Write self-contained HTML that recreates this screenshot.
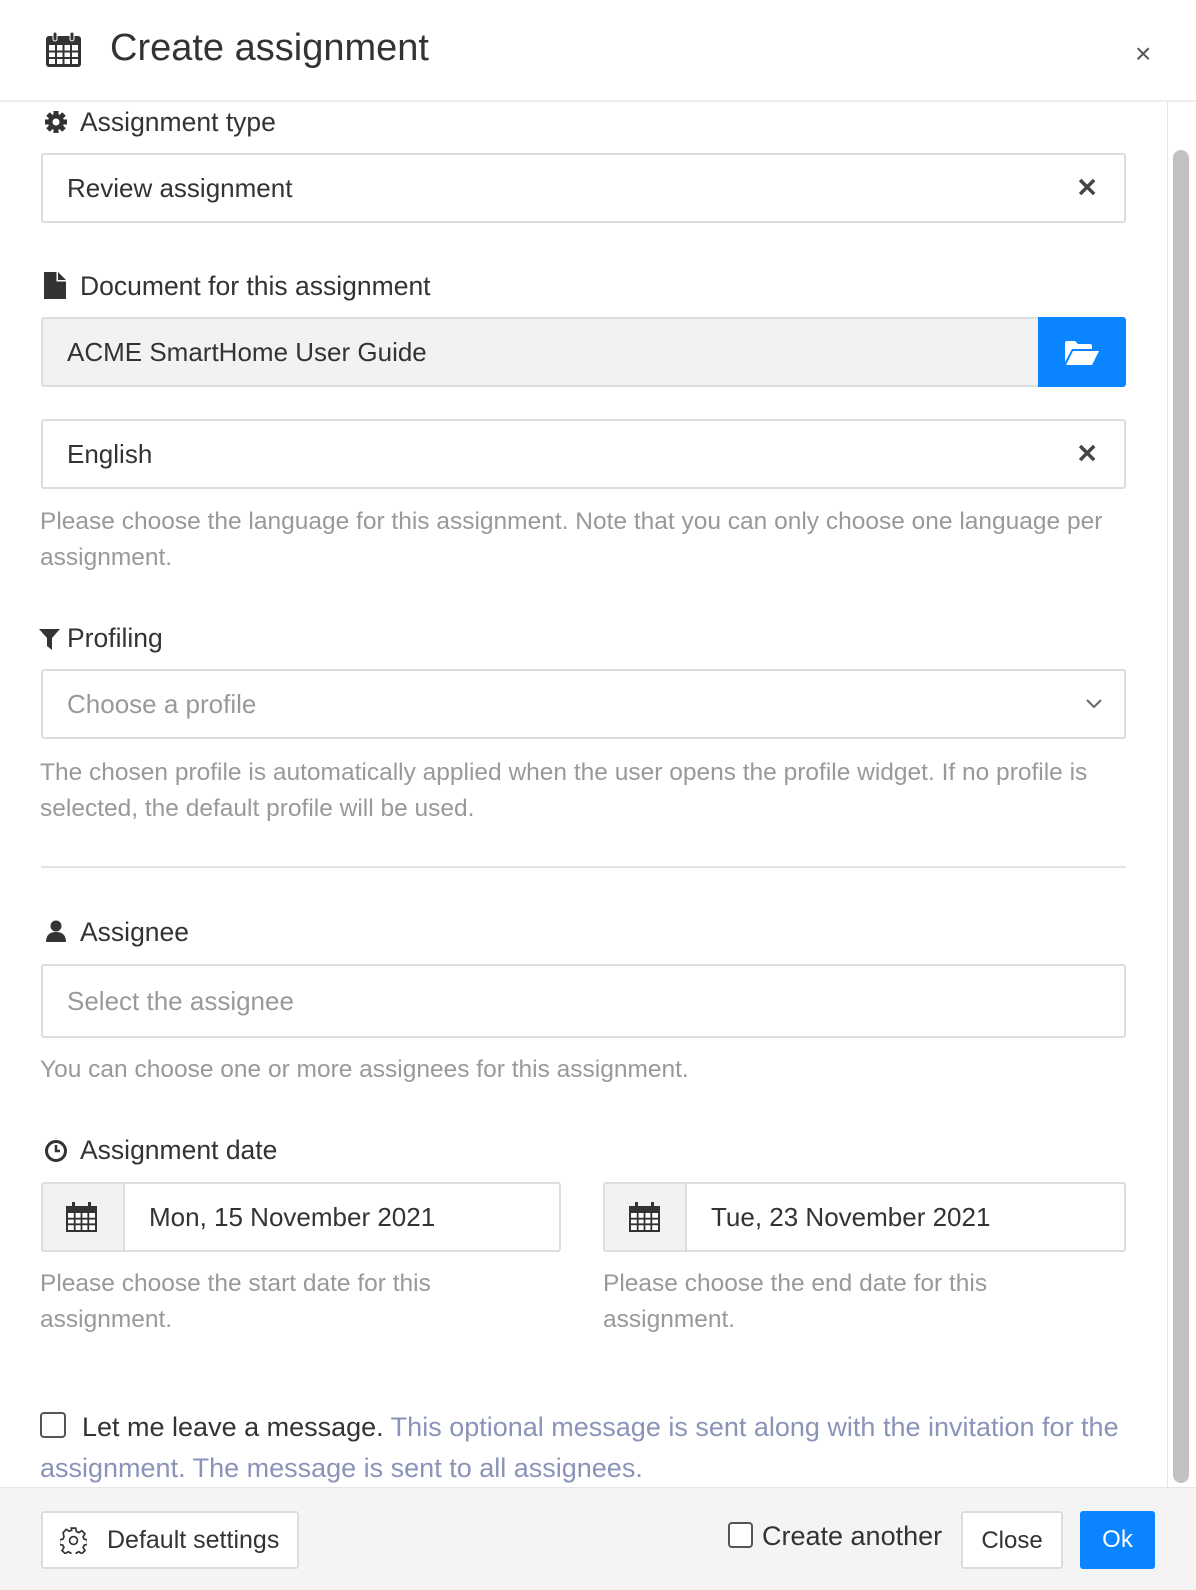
<!DOCTYPE html>
<html><head><meta charset="utf-8"><style>
*{box-sizing:border-box;margin:0;padding:0}
body{width:1196px;height:1590px;position:relative;background:#fff;font-family:"Liberation Sans",sans-serif;color:#333;overflow:hidden}
.a{position:absolute}
.lbl{font-size:26.5px;color:#333;white-space:nowrap}
.inp{position:absolute;left:41px;width:1085px;border:2px solid #ddd;border-radius:3px;background:#fff;font-size:26px;padding-left:24px;display:flex;align-items:center}
.help{position:absolute;left:40px;font-size:24.5px;color:#999;line-height:36px;white-space:nowrap}
.x{position:absolute;right:26px;top:50%;transform:translateY(-50%);font-size:26px;font-weight:bold;color:#444}
</style></head><body>
<svg class="a" style="left:45px;top:31px" width="37" height="37" viewBox="0 0 37 37"><rect x="1" y="5" width="35" height="31" rx="3" fill="#333"/><rect x="8" y="1" width="4" height="9" rx="2" fill="#333" stroke="#fff" stroke-width="1"/><rect x="25" y="1" width="4" height="9" rx="2" fill="#333" stroke="#fff" stroke-width="1"/><g fill="#fff"><rect x="4" y="14" width="29" height="19"/></g><g stroke="#333" stroke-width="2"><line x1="11" y1="14" x2="11" y2="33"/><line x1="18.5" y1="14" x2="18.5" y2="33"/><line x1="26" y1="14" x2="26" y2="33"/><line x1="4" y1="20.5" x2="33" y2="20.5"/><line x1="4" y1="27" x2="33" y2="27"/></g></svg>
<div class="a" style="left:110px;top:27px;font-size:38px;color:#333">Create assignment</div>
<div class="a" style="left:1135px;top:38px;font-size:28px;color:#555">×</div>
<div class="a" style="left:0;top:100px;width:1196px;height:2px;background:#eee"></div>
<div class="a" style="left:1167px;top:102px;width:1px;height:1385px;background:#e5e5e5"></div>
<div class="a" style="left:1173px;top:150px;width:16px;height:1333px;border-radius:8px;background:#c1c1c1"></div>

<svg class="a" style="left:44px;top:110px" width="24" height="24" viewBox="0 0 24 24"><g fill="#333"><circle cx="12" cy="12" r="8"/><g stroke="#333" stroke-width="5"><line x1="12" y1="1" x2="12" y2="23"/><line x1="1" y1="12" x2="23" y2="12"/><line x1="4" y1="4" x2="20" y2="20"/><line x1="20" y1="4" x2="4" y2="20"/></g></g><circle cx="12" cy="12" r="3.5" fill="#fff"/></svg>
<div class="a lbl" style="left:80px;top:107px">Assignment type</div>
<div class="inp" style="top:153px;height:70px">Review assignment<span class="x">✕</span></div>

<svg class="a" style="left:44px;top:272px" width="22" height="27" viewBox="0 0 22 27"><path d="M0 0H13L22 9V27H0Z" fill="#333"/><path d="M13 0V9H22" fill="#fff" stroke="#fff" stroke-width="1"/><path d="M14 0L22 8H14Z" fill="#333"/></svg>
<div class="a lbl" style="left:80px;top:271px">Document for this assignment</div>
<div class="inp" style="top:317px;height:70px;background:#f2f2f2;width:1000px;border-right:none">ACME SmartHome User Guide</div>
<div class="a" style="left:1038px;top:317px;width:88px;height:70px;background:#0a84ff;border-radius:0 3px 3px 0"></div>
<svg class="a" style="left:1064px;top:340px" width="36" height="26" viewBox="0 0 36 26"><path d="M1 3Q1 1 3 1H11L14 4H26Q28 4 28 6V9H8L1 22Z" fill="#fff"/><path d="M9 11H35L28 25H2Z" fill="#fff"/></svg>
<div class="inp" style="top:419px;height:70px">English<span class="x">✕</span></div>
<div class="help" style="top:504px">Please choose the language for this assignment. Note that you can only choose one language per<br>assignment.</div>

<svg class="a" style="left:39px;top:629px" width="21" height="21" viewBox="0 0 21 21"><path d="M0 0H21L13 9V21L8 17V9Z" fill="#333"/></svg>
<div class="a lbl" style="left:67px;top:623px">Profiling</div>
<div class="inp" style="top:669px;height:70px;color:#999">Choose a profile<svg style="position:absolute;right:22px;top:28px" width="16" height="10" viewBox="0 0 16 10"><path d="M1 1L8 8L15 1" fill="none" stroke="#666" stroke-width="2"/></svg></div>
<div class="help" style="top:755px">The chosen profile is automatically applied when the user opens the profile widget. If no profile is<br>selected, the default profile will be used.</div>
<div class="a" style="left:41px;top:866px;width:1085px;height:2px;background:#e3e3e3"></div>

<svg class="a" style="left:46px;top:920px" width="20" height="22" viewBox="0 0 20 22"><circle cx="10" cy="6" r="5.5" fill="#333"/><path d="M0 22Q0 12 10 12Q20 12 20 22Z" fill="#333"/></svg>
<div class="a lbl" style="left:80px;top:917px">Assignee</div>
<div class="inp" style="top:964px;height:74px;color:#999">Select the assignee</div>
<div class="help" style="top:1052px">You can choose one or more assignees for this assignment.</div>

<svg class="a" style="left:44px;top:1139px" width="24" height="24" viewBox="0 0 24 24"><circle cx="12" cy="12" r="9.5" fill="none" stroke="#333" stroke-width="3"/><path d="M12 6V12H16" fill="none" stroke="#333" stroke-width="2.5"/></svg>
<div class="a lbl" style="left:80px;top:1135px">Assignment date</div>

<div class="inp" style="top:1182px;height:70px;width:520px;padding-left:106px">Mon, 15 November 2021</div>
<div class="a" style="left:43px;top:1184px;width:82px;height:66px;background:#f2f2f2;border-right:2px solid #ddd"></div>
<div class="inp" style="left:603px;top:1182px;height:70px;width:523px;padding-left:106px">Tue, 23 November 2021</div>
<div class="a" style="left:605px;top:1184px;width:82px;height:66px;background:#f2f2f2;border-right:2px solid #ddd"></div>
<svg class="a" style="left:65px;top:1202px" width="33" height="31" viewBox="0 0 33 31"><rect x="1" y="4" width="31" height="26" fill="#333"/><rect x="7" y="0" width="3" height="7" fill="#333"/><rect x="23" y="0" width="3" height="7" fill="#333"/><rect x="3" y="11" width="27" height="17" fill="#fff"/><g stroke="#333" stroke-width="1.8"><line x1="9.7" y1="11" x2="9.7" y2="28"/><line x1="16.5" y1="11" x2="16.5" y2="28"/><line x1="23.3" y1="11" x2="23.3" y2="28"/><line x1="3" y1="16.7" x2="30" y2="16.7"/><line x1="3" y1="22.3" x2="30" y2="22.3"/></g></svg>
<svg class="a" style="left:628px;top:1202px" width="33" height="31" viewBox="0 0 33 31"><rect x="1" y="4" width="31" height="26" fill="#333"/><rect x="7" y="0" width="3" height="7" fill="#333"/><rect x="23" y="0" width="3" height="7" fill="#333"/><rect x="3" y="11" width="27" height="17" fill="#fff"/><g stroke="#333" stroke-width="1.8"><line x1="9.7" y1="11" x2="9.7" y2="28"/><line x1="16.5" y1="11" x2="16.5" y2="28"/><line x1="23.3" y1="11" x2="23.3" y2="28"/><line x1="3" y1="16.7" x2="30" y2="16.7"/><line x1="3" y1="22.3" x2="30" y2="22.3"/></g></svg>
<div class="help" style="top:1266px">Please choose the start date for this<br>assignment.</div>
<div class="help" style="left:603px;top:1266px">Please choose the end date for this<br>assignment.</div>

<div class="a" style="left:40px;top:1412px;width:26px;height:26px;border:2px solid #555;border-radius:4px"></div>
<div class="a" style="left:40px;top:1407px;width:1100px;font-size:27px;line-height:41px;text-indent:42px;color:#8a93b8"><span style="color:#333">Let me leave a message.</span> This optional message is sent along with the invitation for the<br>assignment. The message is sent to all assignees.</div>

<div class="a" style="left:0;top:1487px;width:1196px;height:103px;background:#f4f4f4;border-top:1px solid #e6e6e6"></div>
<div class="a" style="left:41px;top:1511px;width:258px;height:58px;border:2px solid #ddd;border-radius:3px;background:#fff"></div>
<svg class="a" style="left:60px;top:1527px" width="27" height="27" viewBox="0 0 24 24"><path d="M10 1h4l.6 3 2.2 1 2.6-1.7 2.8 2.8-1.7 2.6 1 2.2 3 .6v4l-3 .6-1 2.2 1.7 2.6-2.8 2.8-2.6-1.7-2.2 1-.6 3h-4l-.6-3-2.2-1-2.6 1.7-2.8-2.8 1.7-2.6-1-2.2-3-.6v-4l3-.6 1-2.2L2.8 4.9l2.8-2.8 2.6 1.7 2.2-1z" fill="none" stroke="#333" stroke-width="1.5"/><circle cx="12" cy="12" r="3.5" fill="none" stroke="#333" stroke-width="1.5"/></svg>
<div class="a" style="left:107px;top:1526px;font-size:25px;color:#333">Default settings</div>
<div class="a" style="left:728px;top:1522px;width:25px;height:26px;border:2px solid #555;border-radius:4px;background:#fff"></div>
<div class="a" style="left:762px;top:1521px;font-size:27px;color:#333">Create another</div>
<div class="a" style="left:961px;top:1511px;width:102px;height:58px;border:2px solid #ddd;border-radius:3px;background:#fff;font-size:24px;text-align:center;line-height:56px;color:#333">Close</div>
<div class="a" style="left:1080px;top:1511px;width:75px;height:58px;border-radius:3px;background:#0a84ff;font-size:24px;text-align:center;line-height:58px;color:#fff">Ok</div>
</body></html>
